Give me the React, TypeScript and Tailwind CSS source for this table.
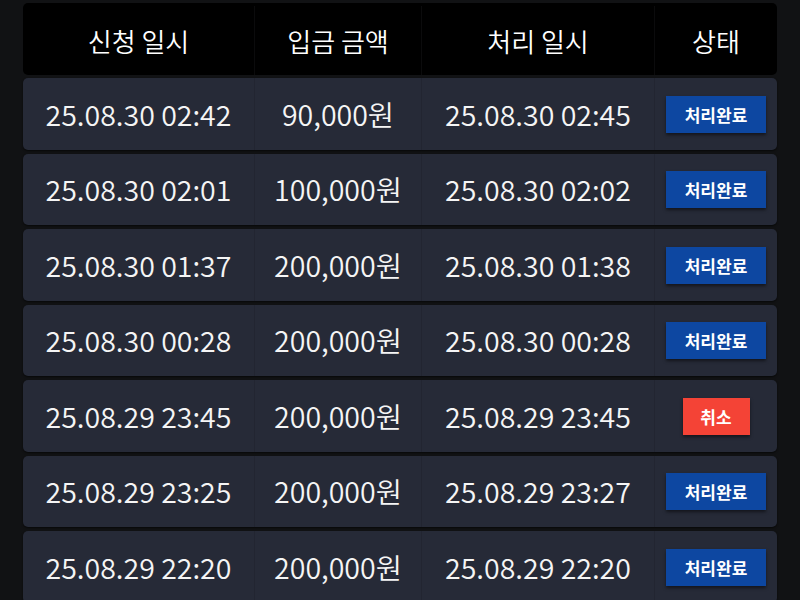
import React from "react";

const rows: { a: string; amt: string; b: string; s: "done" | "cancel" }[] = [
  { a: "25.08.30 02:42", amt: "90,000원", b: "25.08.30 02:45", s: "done" },
  { a: "25.08.30 02:01", amt: "100,000원", b: "25.08.30 02:02", s: "done" },
  { a: "25.08.30 01:37", amt: "200,000원", b: "25.08.30 01:38", s: "done" },
  { a: "25.08.30 00:28", amt: "200,000원", b: "25.08.30 00:28", s: "done" },
  { a: "25.08.29 23:45", amt: "200,000원", b: "25.08.29 23:45", s: "cancel" },
  { a: "25.08.29 23:25", amt: "200,000원", b: "25.08.29 23:27", s: "done" },
  { a: "25.08.29 22:20", amt: "200,000원", b: "25.08.29 22:20", s: "done" },
];

const cols = "grid grid-cols-[232px_167px_233px_122px]";
const cell = "flex items-center justify-center border-r last:border-r-0";

export default function App() {
  return (
    <div
      className="w-[800px] h-[600px] overflow-hidden bg-[#111214] pt-[3px] px-[23px]"
      style={{ fontFamily: '"Noto Sans CJK KR", "Noto Sans", sans-serif' }}
    >
      <div className={`${cols} h-[72px] rounded-[5px] bg-black text-white text-[26px] font-[350] pt-[3px]`}>
        <div className={`${cell} border-[#0b0b0c]`}>신청 일시</div>
        <div className={`${cell} border-[#0b0b0c]`}>입금 금액</div>
        <div className={`${cell} border-[#0b0b0c]`}>처리 일시</div>
        <div className={`${cell} border-[#0b0b0c]`}>상태</div>
      </div>
      <div className="flex flex-col gap-[4px] mt-[3px]">
        {rows.map((r, i) => (
          <div
            key={i}
            className={`${cols} h-[71.5px] rounded-[5px] bg-[#262a37] text-[#f5f5f5] text-[28.5px] font-[350] shadow-[0_1px_2px_rgba(0,0,0,0.6)]`}
          >
            <div className={`${cell} border-[#222531] pt-[1px]`}>{r.a}</div>
            <div className={`${cell} border-[#222531] pt-[1px]`}>{r.amt}</div>
            <div className={`${cell} border-[#222531] pt-[1px]`}>{r.b}</div>
            <div className={`${cell} border-[#222531] pt-[1px]`}>
              {r.s === "done" ? (
                <span className="flex h-[37px] w-[100px] items-center justify-center bg-[#0d47a1] text-[17px] font-bold text-white shadow-[0_2px_3px_rgba(0,0,0,0.5)]">
                  처리완료
                </span>
              ) : (
                <span className="flex h-[37px] w-[67px] items-center justify-center bg-[#f44336] text-[17px] font-bold text-white shadow-[0_2px_3px_rgba(0,0,0,0.5)]">
                  취소
                </span>
              )}
            </div>
          </div>
        ))}
      </div>
    </div>
  );
}
